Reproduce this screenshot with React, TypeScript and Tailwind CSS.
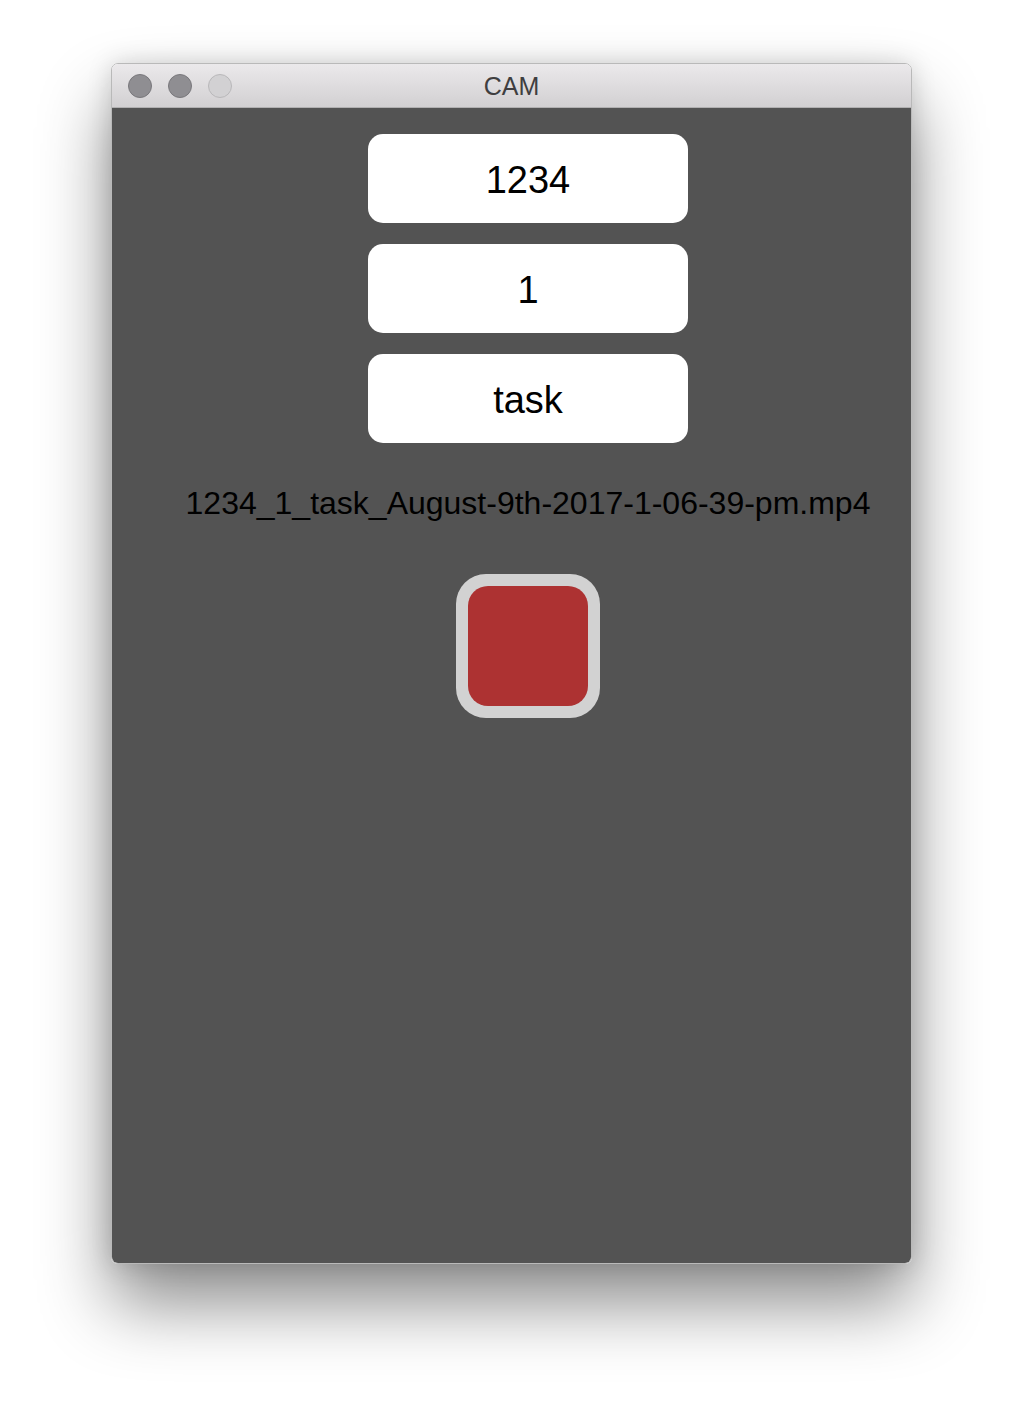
import React from "react";

export default function App() {
  return (
    <div className="w-[1024px] h-[1424px] bg-white pt-[63px] pl-[111px]" style={{ fontFamily: '"Liberation Sans", Arial, sans-serif' }}>
      <div className="w-[801px] h-[1201px] rounded-[7px] overflow-hidden flex flex-col shadow-[0_40px_70px_rgba(0,0,0,0.45),0_0_25px_rgba(0,0,0,0.15)] border border-[#b9b9b9]">
        <div className="h-[44px] shrink-0 bg-gradient-to-b from-[#ebe9eb] to-[#d2d0d2] border-b border-[#b1b0b1] flex items-center relative">
          <div className="flex gap-[16px] pl-[16px]">
            <div className="w-[24px] h-[24px] rounded-full bg-[#8f8e92] border border-[#79787c]" />
            <div className="w-[24px] h-[24px] rounded-full bg-[#8f8e92] border border-[#79787c]" />
            <div className="w-[24px] h-[24px] rounded-full bg-[#d2d1d3] border border-[#b9b8ba]" />
          </div>
          <div className="absolute inset-0 flex items-center justify-center text-[25px] text-[#3f3e40] pt-[2px]">CAM</div>
        </div>
        <div className="flex-1 bg-[#535353] flex flex-col items-center pl-[33px] pt-[26px]">
          <div className="w-[320px] h-[89px] rounded-[15px] bg-white flex items-center justify-center text-[38px] text-black pt-[3px]">1234</div>
          <div className="w-[320px] h-[89px] rounded-[15px] bg-white flex items-center justify-center text-[38px] text-black mt-[21px] pt-[3px]">1</div>
          <div className="w-[320px] h-[89px] rounded-[15px] bg-white flex items-center justify-center text-[38px] text-black mt-[21px] pt-[3px]">task</div>
          <div className="mt-[40px] text-[32px] leading-[40px] text-black whitespace-nowrap">1234_1_task_August-9th-2017-1-06-39-pm.mp4</div>
          <div className="mt-[51px] w-[144px] h-[144px] rounded-[30px] bg-[#d2d2d2] p-[12px]">
            <div className="w-full h-full rounded-[20px] bg-[#ad3232]" />
          </div>
        </div>
      </div>
    </div>
  );
}
